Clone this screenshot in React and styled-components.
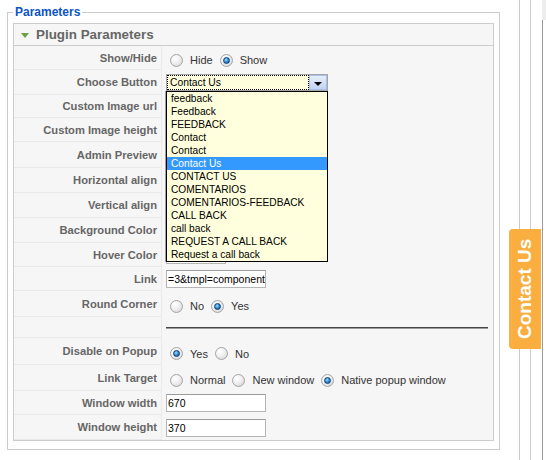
import styled, { createGlobalStyle } from "styled-components";

const Global = createGlobalStyle`
  html, body { margin: 0; padding: 0; background: #ffffff; }
  body { font-family: "Liberation Sans", Arial, sans-serif; }
`;

const Page = styled.div`
  display: flex;
  height: 460px;
  padding-top: 4px;
  box-sizing: border-box;
`;

const Fieldset = styled.fieldset`
  box-sizing: border-box;
  width: 493px;
  margin: 0 0 0 7px;
  padding: 3px 5px 8px 5px;
  border: 1px solid #cccccc;
  align-self: flex-start;
`;

const Legend = styled.legend`
  padding: 0 2px;
  font: bold 12px/16px "Liberation Sans", Arial, sans-serif;
  color: #0b55c4;
`;

const Panel = styled.div`
  border: 1px solid #cccccc;
  background: #f6f6f6;
`;

const PanelTitle = styled.div`
  display: flex;
  align-items: center;
  gap: 7px;
  height: 21px;
  padding-left: 7px;
  border-bottom: 1px solid #cccccc;
  font: bold 13.4px "Liberation Sans", Arial, sans-serif;
  color: #666666;
`;

const Arrow = styled.span`
  width: 0;
  height: 0;
  border-left: 4px solid transparent;
  border-right: 4px solid transparent;
  border-top: 5px solid #6ca03f;
  margin-top: 1px;
`;

const Row = styled.div`
  display: flex;
  height: ${(p) => p.$h}px;
`;

const Key = styled.div`
  box-sizing: border-box;
  width: 148px;
  flex-shrink: 0;
  display: flex;
  align-items: center;
  justify-content: flex-end;
  padding-right: 4px;
  background: #f6f6f6;
  border-right: 1px solid #e9e9e9;
  border-bottom: 1px solid #e9e9e9;
  font: bold 11.2px "Liberation Sans", Arial, sans-serif;
  color: #666666;
`;

const Val = styled.div`
  flex: 1;
  display: flex;
  align-items: center;
  padding: ${(p) => (p.$radio ? "4px" : "0")} 5px 0 4px;
  font: 11px "Liberation Sans", Arial, sans-serif;
  color: #333333;
`;

const Option = styled.label`
  display: inline-flex;
  align-items: center;
  margin-right: 3px;
`;

const Radio = styled.span`
  position: relative;
  box-sizing: border-box;
  width: 13px;
  height: 13px;
  margin: 0 7px 0 4px;
  border-radius: 50%;
  border: 1px solid #a4a4a4;
  background: radial-gradient(circle at 35% 30%, #ffffff 0%, #f0f0f0 45%, #cfcfcf 100%);

  &::after {
    content: "";
    display: ${(p) => (p.$on ? "block" : "none")};
    position: absolute;
    left: 2px;
    top: 2px;
    width: 7px;
    height: 7px;
    box-sizing: border-box;
    border-radius: 50%;
    border: 1px solid #0e3f70;
    background: radial-gradient(circle at 40% 35%, #9fe0ff 0%, #2f8ad6 50%, #0f4f8c 100%);
  }
`;

const TextBox = styled.div`
  box-sizing: border-box;
  width: ${(p) => p.$w || 100}px;
  height: 18px;
  padding-left: 1px;
  display: flex;
  align-items: center;
  background: #ffffff;
  border: 1px solid #b5b5b5;
  border-top-color: #9c9c9c;
  font: 10.5px "Liberation Sans", Arial, sans-serif;
  color: #000000;
  white-space: nowrap;
  overflow: hidden;
`;

const Rule = styled.div`
  flex: 1;
  height: 0;
  border-top: 1px solid #474747;
  border-bottom: 1px solid #9a9a9a;
  margin-top: 1px;
`;

const SelectWrap = styled.div`
  position: relative;
  z-index: 5;
`;

const SelectBox = styled.div`
  box-sizing: border-box;
  width: 162px;
  height: 17px;
  display: flex;
  border: 1px solid #a5a5a5;
  background: #ffffdd;
`;

const SelectText = styled.div`
  flex: 1;
  display: flex;
  align-items: center;
  padding-left: 3px;
  outline: 1px dotted #000000;
  outline-offset: -1px;
  font: 10.3px "Liberation Sans", Arial, sans-serif;
  color: #000000;
`;

const SelectButton = styled.div`
  width: 18px;
  display: flex;
  align-items: center;
  justify-content: center;
  box-sizing: border-box;
  border: 1px solid #a9bfe6;
  background: linear-gradient(#e6eefc, #c1d3f4);

  &::after {
    content: "";
    border-left: 4px solid transparent;
    border-right: 4px solid transparent;
    border-top: 4px solid #000000;
    margin-top: 2px;
  }
`;

const List = styled.ul`
  position: absolute;
  top: 100%;
  left: 0;
  width: 162px;
  box-sizing: border-box;
  margin: 0;
  padding: 0;
  list-style: none;
  background: #ffffdd;
  border: 1px solid #000000;
  box-shadow: -1px 0 0 #a0a0a0;
`;

const Item = styled.li`
  height: 13px;
  line-height: 13px;
  padding-left: 4px;
  font-size: 10.2px;
  color: ${(p) => (p.$active ? "#ffffff" : "#000000")};
  background: ${(p) => (p.$active ? "#3399ff" : "transparent")};
  white-space: nowrap;
`;

const Rail = styled.div`
  position: relative;
  display: flex;
  margin-left: 19px;
  margin-top: -4px;
  height: 460px;
`;

const RailLine = styled.div`
  width: ${(p) => p.$w}px;
  border-left: 1px solid #cccccc;
`;

const RailEdge = styled.div`
  display: flex;
  flex-direction: column;
  width: 4px;

  &::before {
    content: "";
    height: 20px;
    background: #ededed;
  }
  &::after {
    content: "";
    flex: 1;
    border-left: 1px solid #9a9a9a;
  }
`;

const ContactTab = styled.div`
  position: absolute;
  left: -10px;
  top: 229px;
  width: 32px;
  height: 120px;
  display: flex;
  align-items: center;
  justify-content: center;
  background: #faae40;
  color: #ffffff;
  font: bold 19px "Liberation Sans", Arial, sans-serif;
  writing-mode: vertical-rl;
  transform: rotate(180deg);
  border-radius: 0 4px 4px 0;
`;

const choices = [
  "feedback",
  "Feedback",
  "FEEDBACK",
  "Contact",
  "Contact",
  "Contact Us",
  "CONTACT US",
  "COMENTARIOS",
  "COMENTARIOS-FEEDBACK",
  "CALL BACK",
  "call back",
  "REQUEST A CALL BACK",
  "Request a call back",
];

const Radios = ({ options, checked }) => (
  <>
    {options.map((o) => (
      <Option key={o}>
        <Radio $on={o === checked} />
        {o}
      </Option>
    ))}
  </>
);

const rows = [
  { label: "Show/Hide", h: 24, radio: true, el: <Radios options={["Hide", "Show"]} checked="Show" /> },
  {
    label: "Choose Button",
    h: 25,
    el: (
      <SelectWrap>
        <SelectBox>
          <SelectText>Contact Us</SelectText>
          <SelectButton />
        </SelectBox>
        <List>
          {choices.map((c, i) => (
            <Item key={i} $active={i === 5}>
              {c}
            </Item>
          ))}
        </List>
      </SelectWrap>
    ),
  },
  { label: "Custom Image url", h: 23, el: <TextBox $w={150} /> },
  { label: "Custom Image height", h: 24, el: <TextBox $w={60} /> },
  { label: "Admin Preview", h: 26, el: <TextBox $w={60} /> },
  { label: "Horizontal align", h: 25, el: <TextBox $w={60} /> },
  { label: "Vertical align", h: 25, el: <TextBox $w={60} /> },
  { label: "Background Color", h: 25, el: <TextBox $w={60} /> },
  { label: "Hover Color", h: 24, el: <TextBox $w={60} /> },
  { label: "Link", h: 24, el: <TextBox>=3&amp;tmpl=component</TextBox> },
  { label: "Round Corner", h: 26, radio: true, el: <Radios options={["No", "Yes"]} checked="Yes" /> },
  { label: "", h: 21, el: <Rule /> },
  { label: "Disable on Popup", h: 27, radio: true, el: <Radios options={["Yes", "No"]} checked="Yes" /> },
  {
    label: "Link Target",
    h: 26,
    radio: true,
    el: <Radios options={["Normal", "New window", "Native popup window"]} checked="Native popup window" />,
  },
  { label: "Window width", h: 24, el: <TextBox>670</TextBox> },
  { label: "Window height", h: 25, el: <TextBox>370</TextBox> },
];

export default function App() {
  return (
    <Page>
      <Global />
      <Fieldset>
        <Legend>Parameters</Legend>
        <Panel>
          <PanelTitle>
            <Arrow />
            Plugin Parameters
          </PanelTitle>
          {rows.map((r, i) => (
            <Row key={i} $h={r.h}>
              <Key>{r.label}</Key>
              <Val $radio={r.radio}>{r.el}</Val>
            </Row>
          ))}
        </Panel>
      </Fieldset>
      <Rail>
        <RailLine $w={10} />
        <RailLine $w={11} />
        <RailEdge />
        <ContactTab>Contact Us</ContactTab>
      </Rail>
    </Page>
  );
}
